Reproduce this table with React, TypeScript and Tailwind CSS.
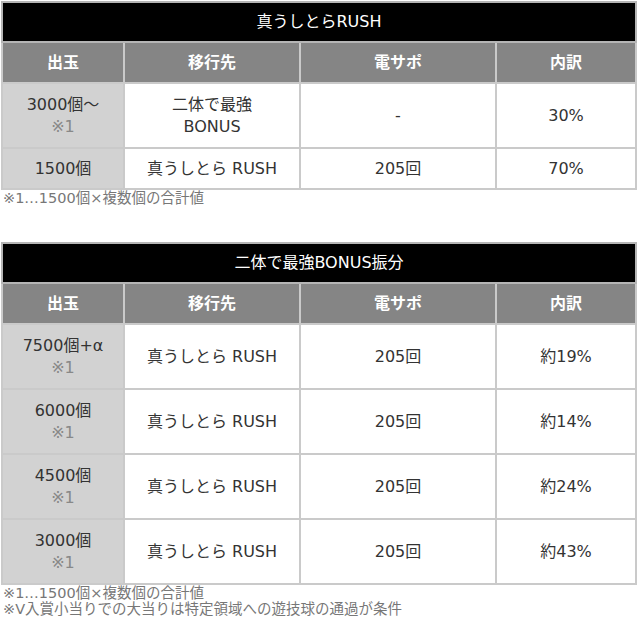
const font = { fontFamily: '"DejaVu Sans", "Noto Sans CJK JP", sans-serif' };

type Row = { out: string; note?: boolean; dest: string[]; den: string; ratio: string };

const rush: Row[] = [
  { out: "3000個～", note: true, dest: ["二体で最強", "BONUS"], den: "-", ratio: "30%" },
  { out: "1500個", dest: ["真うしとら RUSH"], den: "205回", ratio: "70%" },
];

const bonus: Row[] = [
  { out: "7500個+α", note: true, dest: ["真うしとら RUSH"], den: "205回", ratio: "約19%" },
  { out: "6000個", note: true, dest: ["真うしとら RUSH"], den: "205回", ratio: "約14%" },
  { out: "4500個", note: true, dest: ["真うしとら RUSH"], den: "205回", ratio: "約24%" },
  { out: "3000個", note: true, dest: ["真うしとら RUSH"], den: "205回", ratio: "約43%" },
];

const cell = "border-2 border-[#cacaca] text-center align-middle";

const SpecTable = ({ title, rows }: { title: string; rows: Row[] }) => (
  <table className="w-[636px] table-fixed border-collapse text-[16px] leading-[22px] text-[#333]">
    <colgroup>
      <col className="w-[122px]" />
      <col className="w-[176px]" />
      <col className="w-[196px]" />
      <col />
    </colgroup>
    <thead>
      <tr className="h-[40px]">
        <th colSpan={4} className="border-2 border-[#b5b5b5] bg-black font-normal text-white">
          {title}
        </th>
      </tr>
      <tr className="h-[41px] bg-[#858585] text-white">
        {["出玉", "移行先", "電サポ", "内訳"].map((h) => (
          <th key={h} className={`${cell} font-semibold`}>
            {h}
          </th>
        ))}
      </tr>
    </thead>
    <tbody>
      {rows.map((r, i) => (
        <tr key={i} className={r.note ? "h-[65px]" : "h-[41px]"}>
          <td className={`${cell} bg-[#d2d2d2]`}>
            <div>{r.out}</div>
            {r.note && <div className="text-[#888]">※1</div>}
          </td>
          <td className={`${cell} bg-white`}>
            {r.dest.map((d) => (
              <div key={d}>{d}</div>
            ))}
          </td>
          <td className={`${cell} bg-white`}>{r.den}</td>
          <td className={`${cell} bg-white`}>{r.ratio}</td>
        </tr>
      ))}
    </tbody>
  </table>
);

export default function App() {
  return (
    <div className="min-h-[618px] w-[640px] bg-white pl-px pt-px" style={font}>
      <SpecTable title="真うしとらRUSH" rows={rush} />
      <p className="pl-[2px] text-[14.5px] leading-[16px] text-[#777]">※1…1500個×複数個の合計値</p>
      <div className="h-[36px]" />
      <SpecTable title="二体で最強BONUS振分" rows={bonus} />
      <div className="pl-[2px] text-[14.5px] leading-[16px] text-[#777]">
        <p>※1…1500個×複数個の合計値</p>
        <p>※V入賞小当りでの大当りは特定領域への遊技球の通過が条件</p>
      </div>
    </div>
  );
}
